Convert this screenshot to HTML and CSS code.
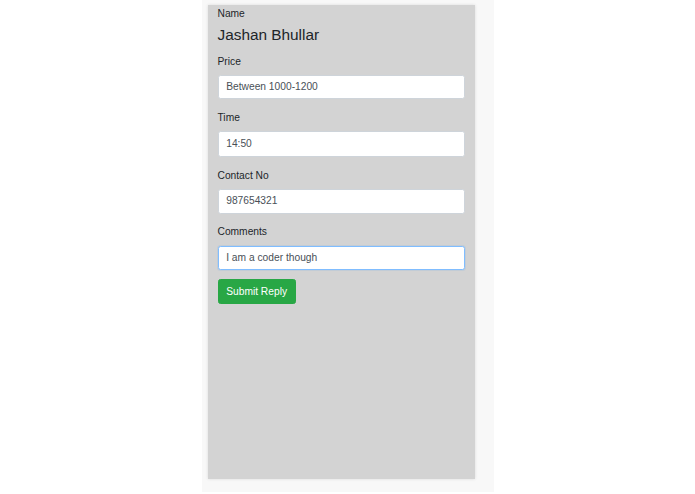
FILE: index.html
```html
<!DOCTYPE html>
<html>
<head>
<meta charset="utf-8">
<link rel="stylesheet" href="styles.css">
</head>
<body>
<div class="outer">
  <div class="panel">
    <label class="lbl lbl-name">Name</label>
    <h4 class="person">Jashan Bhullar</h4>
    <div class="group">
      <label class="lbl">Price</label>
      <div class="field">Between 1000-1200</div>
    </div>
    <div class="group">
      <label class="lbl">Time</label>
      <div class="field field-time">14:50</div>
    </div>
    <div class="group">
      <label class="lbl">Contact No</label>
      <div class="field">987654321</div>
    </div>
    <div class="group group-last">
      <label class="lbl">Comments</label>
      <div class="field field-focus">I am a coder though</div>
    </div>
    <button class="btn">Submit Reply</button>
  </div>
</div>
</body>
</html>
```
FILE: styles.css
```css
html, body {
  margin: 0;
  padding: 0;
  background: #ffffff;
}
body {
  font-family: "Liberation Sans", Arial, sans-serif;
  color: #212529;
}
.outer {
  width: 292px;
  height: 492px;
  margin: 0 auto;
  background: #f8f8f8;
  padding: 5px 0 0 6px;
  box-sizing: border-box;
}
.panel {
  width: 267px;
  height: 474px;
  background: #d3d3d3;
  box-shadow: 0 0 3px rgba(0, 0, 0, 0.12);
  padding: 1px 10px 0;
  box-sizing: border-box;
  display: flex;
  flex-direction: column;
  align-items: stretch;
}
.lbl {
  display: block;
  font-size: 10.24px;
  line-height: 15.36px;
  margin-bottom: 6px;
  color: #212529;
}
.lbl-name {
  margin-bottom: 5px;
}
.person {
  margin: 0 0 9px;
  font-size: 15.36px;
  line-height: 18.4px;
  font-weight: 400;
  color: #212529;
}
.group {
  margin-bottom: 10.6px;
}
.group-last {
  margin-bottom: 9.6px;
}
.field {
  height: 24.3px;
  box-sizing: border-box;
  background: #ffffff;
  border: 1px solid #ced4da;
  border-radius: 2.56px;
  padding: 0 7.7px;
  font-size: 10.24px;
  line-height: 22.3px;
  color: #495057;
}
.field-time {
  height: 26px;
  line-height: 24px;
}
.field-focus {
  border-color: #80bdff;
  box-shadow: 0 0 0 1px rgba(0, 123, 255, 0.08);
}
.btn {
  align-self: flex-start;
  height: 24.6px;
  font-family: "Liberation Sans", Arial, sans-serif;
  font-size: 10.24px;
  line-height: 15.36px;
  padding: 0 7.68px;
  color: #ffffff;
  background: #28a745;
  border: 1px solid #28a745;
  border-radius: 2.56px;
  cursor: pointer;
}
```
